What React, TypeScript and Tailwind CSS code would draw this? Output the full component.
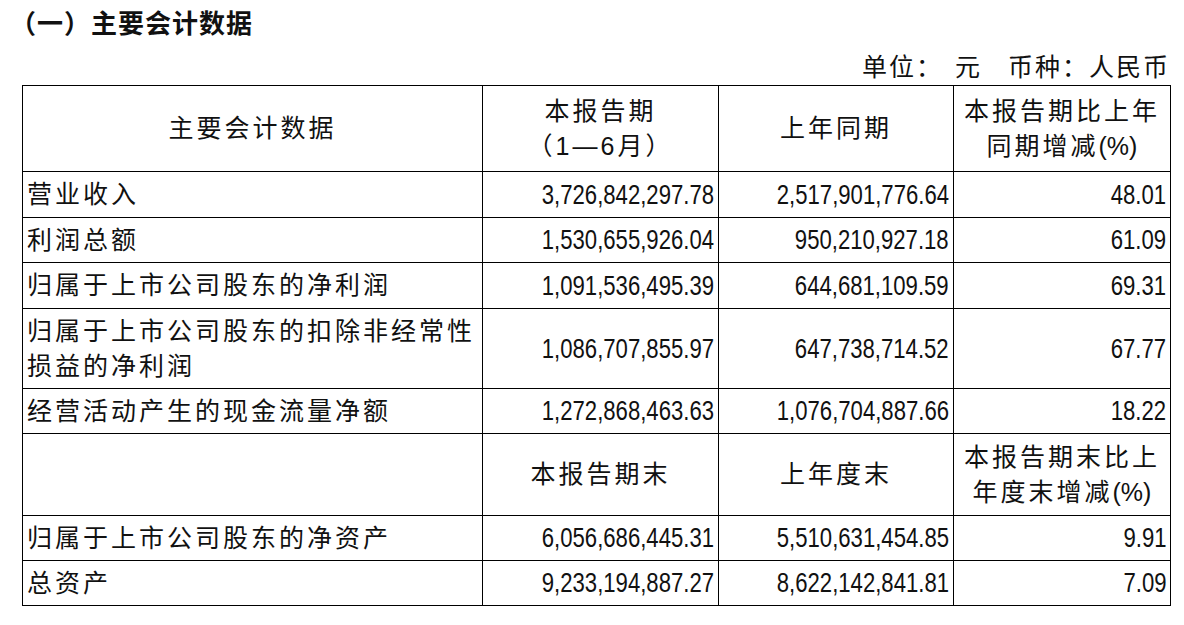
import React from "react";

const rowsTop = [
  ["营业收入", "3,726,842,297.78", "2,517,901,776.64", "48.01"],
  ["利润总额", "1,530,655,926.04", "950,210,927.18", "61.09"],
  ["归属于上市公司股东的净利润", "1,091,536,495.39", "644,681,109.59", "69.31"],
];

const rowsBottom = [
  ["归属于上市公司股东的净资产", "6,056,686,445.31", "5,510,631,454.85", "9.91"],
  ["总资产", "9,233,194,887.27", "8,622,142,841.81", "7.09"],
];

function Num({ v }: { v: string }) {
  return (
    <div className="flex items-center justify-end pr-[4px] border-r border-b border-black">
      <span className="inline-block origin-right scale-x-[0.79] text-[28px] leading-none">{v}</span>
    </div>
  );
}

function Label({ children }: { children: React.ReactNode }) {
  return (
    <div className="flex items-center pl-[4px] border-r border-b border-black text-[25px] tracking-[3px] leading-[35px]">
      {children}
    </div>
  );
}

function Head({ children }: { children: React.ReactNode }) {
  return (
    <div className="flex items-center justify-center text-center border-r border-b border-black text-[25px] tracking-[3px] leading-[35px]">
      <div>{children}</div>
    </div>
  );
}

function Row({ r }: { r: string[] }) {
  return (
    <>
      <Label>{r[0]}</Label>
      <Num v={r[1]} />
      <Num v={r[2]} />
      <Num v={r[3]} />
    </>
  );
}

export default function App() {
  return (
    <div className="w-[1184px] h-[625px] bg-white text-[#111] font-['Liberation_Sans','Noto_Sans_CJK_SC',sans-serif] overflow-hidden">
      <div className="h-[48px] flex items-center pl-[10px] text-[26px] font-bold tracking-[1px]">
        （一）主要会计数据
      </div>
      <div className="h-[37px] flex items-center justify-end pr-[14px] pt-[2px] text-[25px] tracking-[2px]">
        <span>单位：</span>
        <span className="ml-[12px]">元</span>
        <span className="ml-[26px]">币种：人民币</span>
      </div>

      <div className="ml-[22px] w-[1149px] border-l border-t border-black grid grid-cols-[460px_236px_235px_217px] grid-rows-[86px_46px_45px_46px_80px_45px_82px_45px_45px]">
        <Head>主要会计数据</Head>
        <Head>
          本报告期
          <br />
          （1—6月）
        </Head>
        <Head>上年同期</Head>
        <Head>
          本报告期比上年
          <br />
          同期增减<span className="tracking-normal">(%)</span>
        </Head>

        {rowsTop.map((r) => (
          <Row key={r[0]} r={r} />
        ))}

        <Label>
          <div>
            归属于上市公司股东的扣除非经常性
            <br />
            损益的净利润
          </div>
        </Label>
        <Num v="1,086,707,855.97" />
        <Num v="647,738,714.52" />
        <Num v="67.77" />

        <Row r={["经营活动产生的现金流量净额", "1,272,868,463.63", "1,076,704,887.66", "18.22"]} />

        <Head>{""}</Head>
        <Head>本报告期末</Head>
        <Head>上年度末</Head>
        <Head>
          本报告期末比上
          <br />
          年度末增减<span className="tracking-normal">(%)</span>
        </Head>

        {rowsBottom.map((r) => (
          <Row key={r[0]} r={r} />
        ))}
      </div>
    </div>
  );
}
